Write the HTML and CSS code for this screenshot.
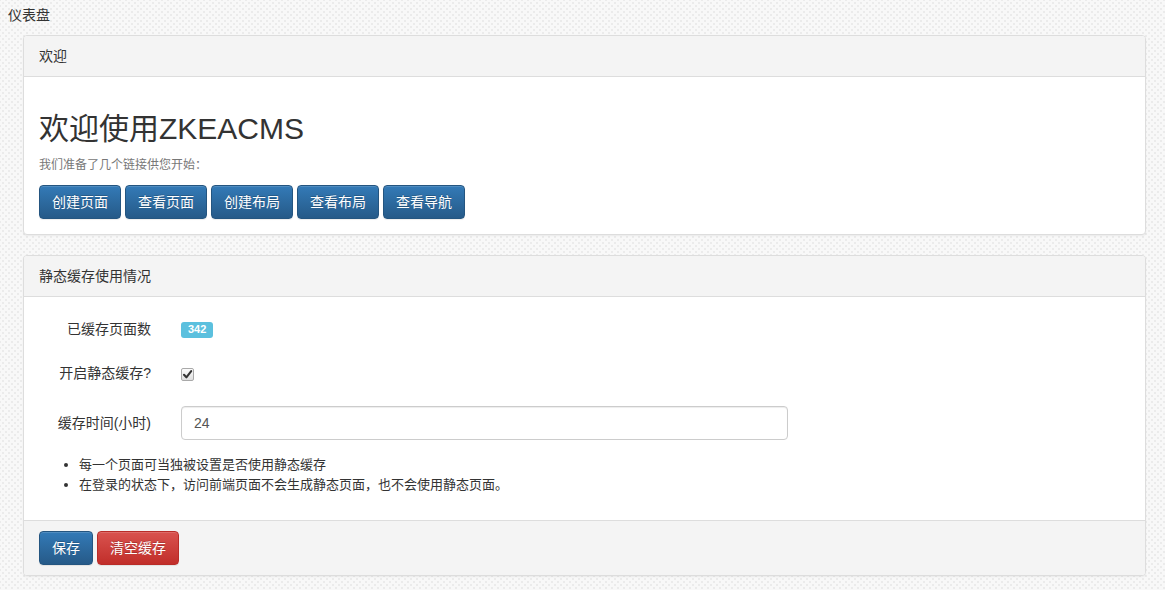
FILE: index.html
```html
<!DOCTYPE html>
<html lang="zh-CN">
<head>
<meta charset="utf-8">
<title>仪表盘</title>
<link rel="stylesheet" href="styles.css">
</head>
<body>
<div class="page-title">仪表盘</div>
<div class="content">
  <div class="panel">
    <div class="panel-heading">欢迎</div>
    <div class="panel-body">
      <h1 class="welcome">欢迎使用ZKEACMS</h1>
      <p class="muted">我们准备了几个链接供您开始：</p>
      <div class="btn-row">
        <a class="btn btn-primary">创建页面</a>
        <a class="btn btn-primary">查看页面</a>
        <a class="btn btn-primary">创建布局</a>
        <a class="btn btn-primary">查看布局</a>
        <a class="btn btn-primary">查看导航</a>
      </div>
    </div>
  </div>

  <div class="panel">
    <div class="panel-heading">静态缓存使用情况</div>
    <div class="panel-body">
      <div class="form-row row-static">
        <label class="control-label">已缓存页面数</label>
        <div class="control"><span class="label-info">342</span></div>
      </div>
      <div class="form-row row-check">
        <label class="control-label">开启静态缓存?</label>
        <div class="control">
          <span class="checkbox">
            <svg width="13" height="13" viewBox="0 0 13 13"><path d="M3 6.8 L5.4 9.3 L10.2 3.2" fill="none" stroke="#333" stroke-width="2.1" stroke-linecap="round" stroke-linejoin="round"/></svg>
          </span>
        </div>
      </div>
      <div class="form-row row-input">
        <label class="control-label">缓存时间(小时)</label>
        <div class="control"><input class="form-control" type="text" value="24"></div>
      </div>
      <ul class="notes">
        <li>每一个页面可当独被设置是否使用静态缓存</li>
        <li>在登录的状态下，访问前端页面不会生成静态页面，也不会使用静态页面。</li>
      </ul>
    </div>
    <div class="panel-footer">
      <a class="btn btn-primary">保存</a>
      <a class="btn btn-danger">清空缓存</a>
    </div>
  </div>
</div>
</body>
</html>
```

FILE: styles.css
```css
* { box-sizing: border-box; }

html, body {
  margin: 0;
  padding: 0;
}

body {
  font-family: "Liberation Sans", "Noto Sans CJK SC", sans-serif;
  font-size: 14px;
  line-height: 20px;
  color: #333;
  background-color: #f8f8f8;
  background-image:
    radial-gradient(circle, #ebebeb 0.8px, transparent 1px),
    radial-gradient(circle, #ebebeb 0.8px, transparent 1px);
  background-size: 6px 6px;
  background-position: 0 0, 3px 3px;
  min-height: 590px;
}

.page-title {
  height: 35px;
  padding: 5px 8px 0;
  font-size: 14px;
  line-height: 20px;
}

.content {
  padding: 0 19px 0 23px;
}

.panel {
  background: #fff;
  border: 1px solid #ddd;
  border-radius: 4px;
  box-shadow: 0 1px 2px rgba(0, 0, 0, 0.06);
  margin-bottom: 20px;
}

.panel-heading {
  background: #f4f4f4;
  border-bottom: 1px solid #ddd;
  border-radius: 3px 3px 0 0;
  padding: 10px 15px;
  font-size: 14px;
  line-height: 20px;
}

.panel-body {
  padding: 15px;
}

.welcome {
  margin: 20px 0 10px;
  font-size: 30px;
  font-weight: normal;
  line-height: 33px;
}

.muted {
  margin: 0 0 10px;
  font-size: 12px;
  line-height: 20px;
  color: #777;
}

.btn-row {
  display: flex;
  gap: 4px;
}

.btn {
  display: inline-block;
  height: 34px;
  padding: 6px 12px;
  font-size: 14px;
  line-height: 20px;
  color: #fff;
  border: 1px solid transparent;
  border-radius: 4px;
  text-shadow: 0 -1px 0 rgba(0, 0, 0, 0.2);
  box-shadow: inset 0 1px 0 rgba(255, 255, 255, 0.15), 0 1px 1px rgba(0, 0, 0, 0.075);
  cursor: pointer;
  white-space: nowrap;
}

.btn-primary {
  background-image: linear-gradient(to bottom, #337ab7 0%, #265a88 100%);
  border-color: #245580;
}

.btn-danger {
  background-image: linear-gradient(to bottom, #d9534f 0%, #c12e2a 100%);
  border-color: #b92c28;
}

.form-row {
  display: flex;
  align-items: center;
  gap: 30px;
}

.control-label {
  width: 112px;
  flex: none;
  text-align: right;
  font-size: 14px;
}

.control {
  flex: none;
  display: flex;
  align-items: center;
}

.row-static {
  height: 34px;
  margin-bottom: 15px;
}

.row-check {
  height: 24px;
  margin-bottom: 21px;
}

.row-input {
  height: 34px;
  margin-bottom: 15px;
}

.label-info {
  display: inline-block;
  background: #5bc0de;
  color: #fff;
  font-size: 11px;
  font-weight: bold;
  line-height: 11px;
  padding: 2px 7px 3px;
  border-radius: 3px;
  position: relative;
  top: 1px;
}

.checkbox {
  display: inline-block;
  width: 13px;
  height: 13px;
  border: 1px solid #a9a9a9;
  border-radius: 2px;
  background: linear-gradient(to bottom, #fcfcfc, #dedede);
  position: relative;
  top: 1px;
}

.checkbox svg {
  display: block;
  margin: -1px 0 0 -1px;
}

.form-control {
  width: 607px;
  height: 34px;
  padding: 6px 12px;
  font-family: "Liberation Sans", "Noto Sans CJK SC", sans-serif;
  font-size: 14px;
  line-height: 20px;
  color: #555;
  background: #fff;
  border: 1px solid #ccc;
  border-radius: 4px;
  box-shadow: inset 0 1px 1px rgba(0, 0, 0, 0.075);
  outline: none;
}

.notes {
  margin: 0 0 10px;
  padding-left: 40px;
  font-size: 13px;
  line-height: 20px;
}

.panel-footer {
  background: #f4f4f4;
  border-top: 1px solid #ddd;
  border-radius: 0 0 3px 3px;
  padding: 10px 15px;
  display: flex;
  gap: 4px;
}
```
